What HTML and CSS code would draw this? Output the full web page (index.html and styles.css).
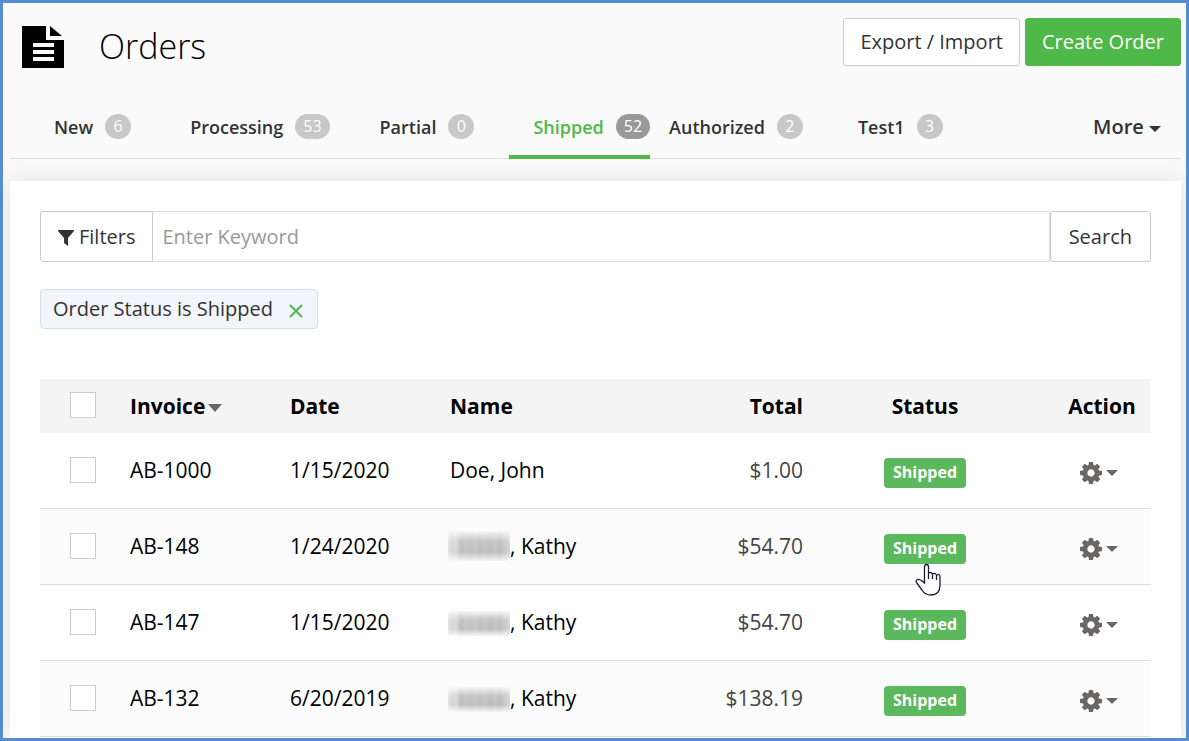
FILE: index.html
```html
<!DOCTYPE html>
<html lang="en">
<head>
<meta charset="utf-8">
<title>Orders</title>
<link rel="stylesheet" href="styles.css">
</head>
<body>
<svg class="defs" aria-hidden="true">
  <symbol id="cog" viewBox="0 0 1536 1536"><path d="M1024 768q0-106-75-181t-181-75-181 75-75 181 75 181 181 75 181-75 75-181zm512-109v222q0 12-8 23t-20 13l-185 28q-19 54-39 91 35 50 107 138 10 12 10 25t-9 23q-27 37-99 108t-94 71q-12 0-26-9l-138-108q-44 23-91 38-16 136-29 186-7 28-36 28h-222q-14 0-24.500-8.500t-11.500-21.500l-28-184q-49-16-90-37l-141 107q-10 9-25 9-14 0-25-11-126-114-165-168-7-10-7-23 0-12 8-23 15-21 51-66.500t54-70.500q-27-50-41-99l-183-27q-13-2-21-12.500t-8-23.500v-222q0-12 8-23t19-13l186-28q14-46 39-92-40-57-107-138-10-12-10-24 0-10 9-23 26-36 98.500-107.500t94.500-71.500q13 0 26 10l138 107q44-23 91-38 16-136 29-186 7-28 36-28h222q14 0 24.500 8.500t11.500 21.500l28 184q49 16 90 37l142-107q9-9 24-9 13 0 25 10 129 119 165 170 7 8 7 22 0 12-8 23-15 21-51 66.500t-54 70.500q26 50 41 98l183 28q13 2 21 12.500t8 23.500z"/></symbol>
</svg>

<header class="header">
  <div class="title">
    <svg class="title-icon" viewBox="0 0 42 42" aria-hidden="true">
      <path d="M0 0H24V14H42V42H0Z"/><path d="M28 0L40 10H28Z"/>
      <path d="M11 19H32M11 26H32M11 33H32" stroke="#fafafa" stroke-width="4"/>
    </svg>
    <h1 class="heading">Orders</h1>
  </div>
  <div class="header-actions">
    <button class="btn" type="button">Export / Import</button>
    <button class="btn btn-primary" type="button">Create Order</button>
  </div>
</header>

<nav class="tabs" aria-label="Order status">
  <a class="tab" href="#new">New <span class="count">6</span></a>
  <a class="tab tab-double" href="#processing">Processing <span class="count">53</span></a>
  <a class="tab" href="#partial">Partial <span class="count">0</span></a>
  <a class="tab tab-active" href="#shipped" aria-current="page">Shipped <span class="count">52</span></a>
  <a class="tab" href="#authorized">Authorized <span class="count">2</span></a>
  <a class="tab" href="#test1">Test1 <span class="count">3</span></a>
  <button class="more" type="button">More <span class="caret"></span></button>
</nav>

<main class="panel">
  <form class="search">
    <button class="btn search-filters" type="button">
      <svg class="funnel" viewBox="0 0 16 16" aria-hidden="true"><path d="M0 0H16V1L10 8V16L6 13V8L0 1Z"/></svg>Filters</button>
    <input class="search-input" type="text" placeholder="Enter Keyword" aria-label="Keyword">
    <button class="btn search-submit" type="submit">Search</button>
  </form>

  <div class="chip">Order Status is Shipped
    <button class="chip-close" type="button" aria-label="Remove filter"><svg class="chip-x" viewBox="0 0 14 14"><path d="M1 1L13 13M13 1L1 13"/></svg></button>
  </div>

  <table class="orders">
    <colgroup><col class="col-check"><col class="col-text"><col class="col-text"><col><col class="col-total"><col class="col-status"><col class="col-action"></colgroup>
    <thead>
      <tr>
        <th class="check"><input class="box" type="checkbox" aria-label="Select all"></th>
        <th>Invoice<span class="caret caret-sort"></span></th>
        <th>Date</th>
        <th>Name</th>
        <th class="total">Total</th>
        <th class="status">Status</th>
        <th class="action">Action</th>
      </tr>
    </thead>
    <tbody>
      <tr>
        <td class="check"><input class="box" type="checkbox" aria-label="Select AB-1000"></td>
        <td>AB-1000</td><td>1/15/2020</td><td>Doe, John</td>
        <td class="total">$1.00</td>
        <td class="status"><span class="badge">Shipped</span></td>
        <td class="action"><button class="gear" type="button" aria-label="Actions"><svg class="cog"><use href="#cog"/></svg><span class="caret"></span></button></td>
      </tr>
      <tr>
        <td class="check"><input class="box" type="checkbox" aria-label="Select AB-148"></td>
        <td>AB-148</td><td>1/24/2020</td><td><span class="redacted"></span>, Kathy</td>
        <td class="total">$54.70</td>
        <td class="status"><span class="badge">Shipped<svg class="pointer" viewBox="0 0 26 34" aria-hidden="true"><path d="M9.500 20V4Q9.500 1.500 11.500 1.500T13.500 4V10Q16 8.500 17.500 11Q20 9.500 21.500 12Q25 10.500 25 14V22Q25 32 16 32Q10 32 7 27L2 20Q0 17.500 2.500 16.500Q5 16 9.500 20ZM13.500 10V16M17.500 11V16M21.500 12V17"/></svg></span></td>
        <td class="action"><button class="gear" type="button" aria-label="Actions"><svg class="cog"><use href="#cog"/></svg><span class="caret"></span></button></td>
      </tr>
      <tr>
        <td class="check"><input class="box" type="checkbox" aria-label="Select AB-147"></td>
        <td>AB-147</td><td>1/15/2020</td><td><span class="redacted redacted-short"></span>, Kathy</td>
        <td class="total">$54.70</td>
        <td class="status"><span class="badge">Shipped</span></td>
        <td class="action"><button class="gear" type="button" aria-label="Actions"><svg class="cog"><use href="#cog"/></svg><span class="caret"></span></button></td>
      </tr>
      <tr>
        <td class="check"><input class="box" type="checkbox" aria-label="Select AB-132"></td>
        <td>AB-132</td><td>6/20/2019</td><td><span class="redacted redacted-short"></span>, Kathy</td>
        <td class="total">$138.19</td>
        <td class="status"><span class="badge">Shipped</span></td>
        <td class="action"><button class="gear" type="button" aria-label="Actions"><svg class="cog"><use href="#cog"/></svg><span class="caret"></span></button></td>
      </tr>
    </tbody>
  </table>
</main>
</body>
</html>
```

FILE: styles.css
```css
* { box-sizing: border-box; }

body {
  margin: 0;
  min-height: 100vh;
  border: 3px solid #548dd4;
  background: #fafafa;
  color: #333;
  font: 20px/28px "Open Sans", "Noto Sans", sans-serif;
  display: flex;
  flex-direction: column;
}

button, input { font: inherit; color: inherit; margin: 0; }
button { cursor: pointer; }
.defs { display: none; }

.header {
  display: flex;
  justify-content: space-between;
  align-items: flex-start;
  padding: 15px 5px 0 19px;
}
.title { display: flex; align-items: center; gap: 35px; padding-top: 8px; }
.title-icon { width: 42px; height: 42px; }
.heading { margin: 0; padding-bottom: 2px; font-size: 34px; line-height: 40px; font-weight: 300; color: #000; }
.header-actions { display: flex; gap: 5px; }

.btn {
  height: 48px;
  padding: 0 16px;
  border: 1px solid #ccc;
  border-radius: 3px;
  background: #fff;
}
.btn-primary { background: #4eb848; border-color: #4eb848; color: #fff; }

.tabs {
  display: flex;
  margin: 28px 5px 22px 7px;
  padding-left: 20px;
  border-bottom: 1px solid #ddd;
}
.tab {
  display: flex;
  align-items: center;
  gap: 12px;
  height: 63px;
  margin-bottom: -1px;
  padding: 0 35px 2px 24px;
  font-size: 18px;
  font-weight: 600;
  color: #333;
  text-decoration: none;
}
.tab-double { padding-right: 26px; }
.tab-active { padding-right: 0; color: #4eb848; box-shadow: inset 0 -4px #4eb848; }
.tab-active + .tab { padding-left: 19px; padding-right: 31px; }
.count {
  min-width: 26px;
  padding: 0 8px;
  border-radius: 13px;
  background: #c8c8c8;
  color: #fff;
  font-size: 16px;
  font-weight: 400;
  line-height: 25px;
  text-align: center;
}
.tab-active .count { background: #999; }
.more {
  margin-left: auto;
  padding: 0 20px;
  border: 0;
  background: none;
  font-weight: 600;
}

.caret {
  display: inline-block;
  border: 6px solid transparent;
  border-top-color: currentColor;
  border-bottom: 0;
  vertical-align: middle;
}
.caret-sort { border-width: 8px 7px 0; margin-left: 3px; color: #666; }

.panel {
  flex: 1;
  margin: 0 5px 0 7px;
  padding: 30px 30px 1px;
  background: #fff;
  box-shadow: 0 0 24px rgba(0, 0, 0, .1);
  clip-path: inset(-30px -5px 0 -7px);
}

.search { display: flex; margin-bottom: 27px; }
.search .btn { height: 51px; }
.search .search-filters { padding: 0 17px; border-radius: 3px 0 0 3px; }
.search .search-submit { padding: 0 18px; }
.funnel { width: 16px; height: 16px; margin-right: 5px; fill: #333; vertical-align: -2px; }
.search-input {
  flex: 1;
  min-width: 0;
  padding: 0 9px;
  border: 1px solid #ddd;
  border-left: 0;
  background: #fff;
  outline: 0;
}
.search-input::placeholder { color: #999; opacity: 1; }

.chip {
  display: inline-flex;
  align-items: center;
  gap: 14px;
  height: 40px;
  margin-bottom: 50px;
  padding: 0 12px;
  border: 1px solid #d2e0eb;
  border-radius: 4px;
  background: #f2f5fa;
}
.chip-close { display: flex; padding: 4px 2px 0; border: 0; background: none; }
.chip-x { width: 14px; height: 14px; fill: none; stroke: #4eb848; stroke-width: 2; }

.orders {
  width: 100%;
  table-layout: fixed;
  border-collapse: separate;
  border-spacing: 0;
  color: #000;
  font-size: 21px;
}
.col-check { width: 90px; }
.col-text { width: 160px; }
.col-total { width: 120px; }
.col-status { width: 244px; }
.col-action { width: 104px; }
.orders th, .orders td { padding: 0; text-align: left; }
.orders th { height: 54px; background: #f4f4f4; font-weight: 700; }
.orders td { height: 76px; padding-bottom: 2px; border-bottom: 1px solid #ddd; }
.orders tbody tr:nth-child(even) { background: #fcfcfc; }
.orders .check { padding-left: 30px; }
.orders .total { text-align: right; }
.orders td.total { color: #444; }
.orders .status, .orders .action { text-align: center; }
.orders th.action { padding-left: 6px; }

.box {
  display: block;
  appearance: none;
  width: 26px;
  height: 26px;
  border: 1px solid #ccc;
  background: #fff;
}
.orders th .box { margin-bottom: 2px; }
.badge {
  position: relative;
  display: inline-block;
  padding: 0 9px 2px;
  margin-top: 6px;
  border-radius: 4px;
  background: #5cb85c;
  color: #fff;
  font-size: 16px;
  font-weight: 700;
  line-height: 28px;
  vertical-align: middle;
}
.pointer {
  position: absolute;
  left: 31px;
  top: 29px;
  width: 26px;
  height: 34px;
  fill: #fff;
  stroke: #1a1a2e;
  stroke-width: 1.3;
}
.gear {
  display: inline-flex;
  align-items: center;
  gap: 4px;
  padding: 2px 0 0;
  border: 0;
  background: none;
  color: #6b6666;
  vertical-align: middle;
}
.cog { width: 22px; height: 22px; fill: currentColor; }
.redacted {
  display: inline-block;
  width: 62px;
  height: 30px;
  margin-left: -2px;
  vertical-align: -7px;
  background:
    linear-gradient(rgba(252, 252, 252, .9), rgba(252, 252, 252, .2) 35%, rgba(252, 252, 252, .1) 70%, rgba(252, 252, 252, .9)),
    linear-gradient(90deg, #e0e0e0, #d0d0d0 8%, #d4d4d4 13%, #b4b4b4 21%, #bebebe 28%, #b8b8b8 36%, #bebebe 44%, #b6b6b6 52%, #bcbcbc 60%, #b4b4b4 68%, #bcbcbc 76%, #b4b4b4 83%, #d0d0d0);
}
.redacted-short { height: 25px; vertical-align: -6px; }
```
